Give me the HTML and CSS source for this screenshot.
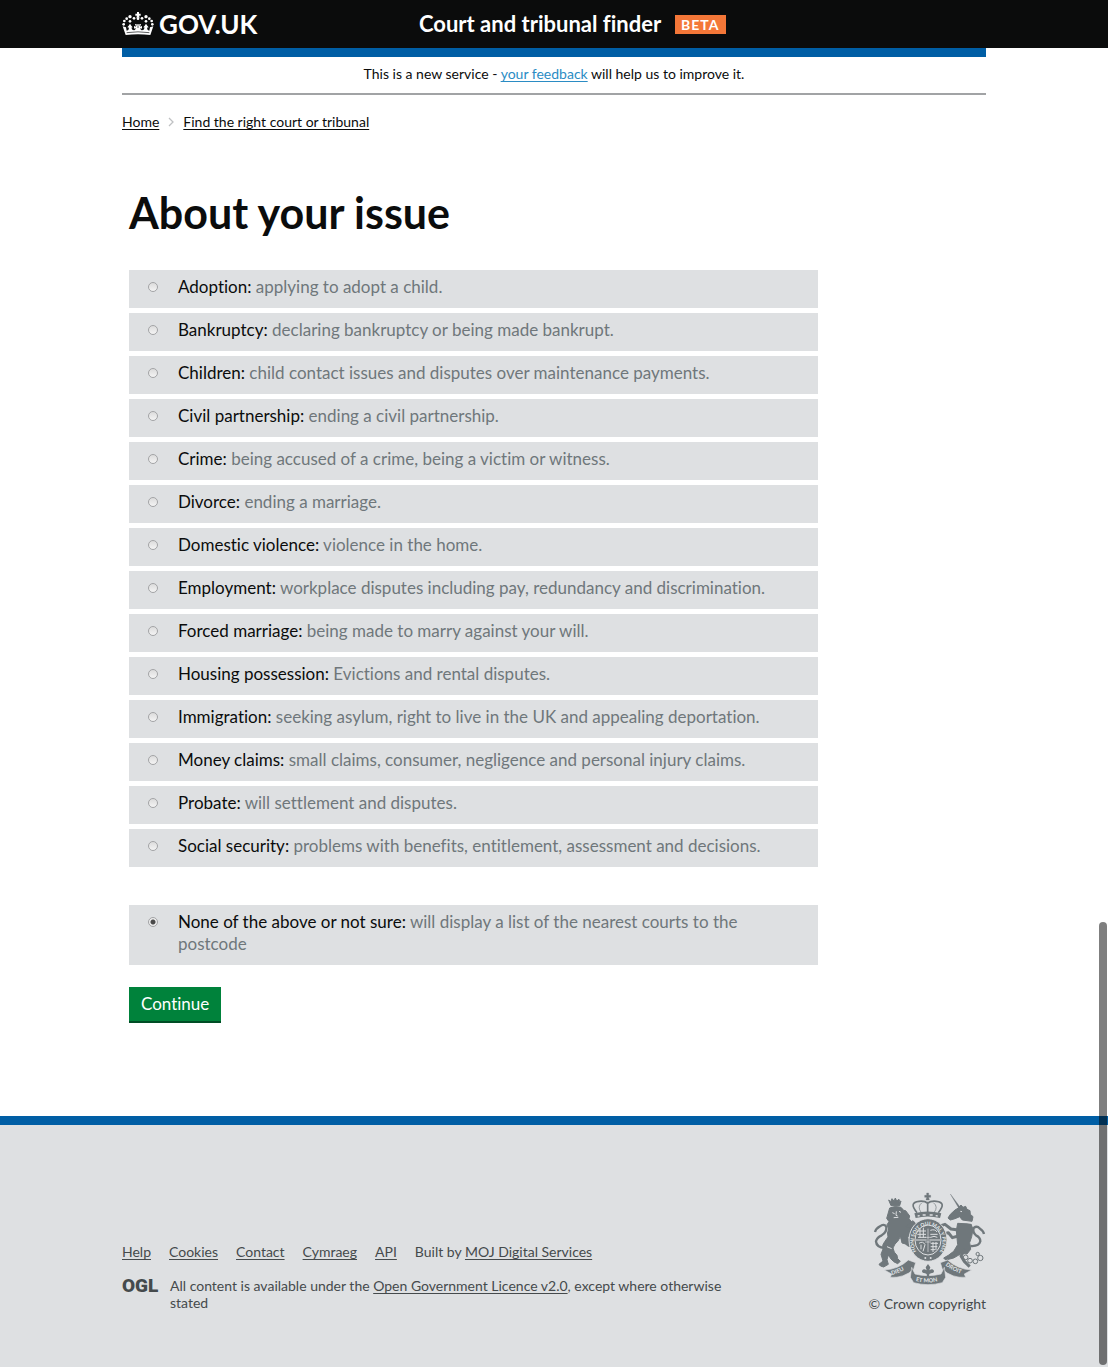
FILE: index.html
```html
<!DOCTYPE html>
<html lang="en">
<head>
<meta charset="utf-8">
<meta name="viewport" content="width=device-width, initial-scale=1">
<title>About your issue - Court and tribunal finder</title>
<link rel="stylesheet" href="styles.css">
</head>
<body>
<header class="site-header">
  <div class="container header-row">
    <a class="logo" href="#">
      <svg class="crown" viewBox="36 36 96 72" aria-hidden="true">
        <g fill="#fff">
          <path d="M81 36h6v5h5v6h-5l2 6h-10l2-6h-5v-6h5z"/>
          <circle cx="84" cy="56" r="4"/><circle cx="72" cy="55" r="4"/><circle cx="96" cy="55" r="4"/>
          <circle cx="60" cy="50" r="5"/><circle cx="108" cy="50" r="5"/>
          <circle cx="50" cy="56" r="4"/><circle cx="118" cy="56" r="4"/>
          <circle cx="43" cy="63" r="4"/><circle cx="125" cy="63" r="4"/>
          <circle cx="41" cy="73" r="4"/><circle cx="127" cy="73" r="4"/>
          <circle cx="60" cy="64" r="4"/><circle cx="108" cy="64" r="4"/>
          <path d="M38 79l10 3 2 10q7-1 7-9l-5-1 4-5 4-6 4 6 4 5-4 1q2 8 9 8 4-1 4-7l-5 2v-8l6 2-3-8h18l-3 8 6-2v8l-5-2q0 6 4 7 7 0 9-8l-4-1 4-5 4-6 4 6 4 5-5 1q0 8 7 9l2-10 10-3-9 26q-37-5-74 0z"/>
        </g>
        <path d="M50 98q34-5 68 0" fill="none" stroke="#0b0c0c" stroke-width="2"/>
        <path d="M78 76l6-5 6 5M84 76v8" fill="none" stroke="#0b0c0c" stroke-width="2"/>
      </svg>
      <span>GOV.UK</span>
    </a>
    <div class="service">
      <span class="service-name">Court and tribunal finder</span>
      <span class="beta">BETA</span>
    </div>
  </div>
</header>

<div class="container">
  <p class="notice">This is a new service - <a href="#">your feedback</a> will help us to improve it.</p>
  <nav class="breadcrumb" aria-label="Breadcrumb">
    <a href="#">Home</a>
    <svg class="chevron" viewBox="0 0 6 10" aria-hidden="true"><path d="M1 1l4 4-4 4" fill="none" stroke="#bfc1c3" stroke-width="1.3"/></svg>
    <a href="#">Find the right court or tribunal</a>
  </nav>

  <main class="content">
    <h1>About your issue</h1>
    <form>
      <div class="options">
        <label class="option"><input type="radio" name="issue"><span><b>Adoption:</b> applying to adopt a child.</span></label>
        <label class="option"><input type="radio" name="issue"><span><b>Bankruptcy:</b> declaring bankruptcy or being made bankrupt.</span></label>
        <label class="option"><input type="radio" name="issue"><span><b>Children:</b> child contact issues and disputes over maintenance payments.</span></label>
        <label class="option"><input type="radio" name="issue"><span><b>Civil partnership:</b> ending a civil partnership.</span></label>
        <label class="option"><input type="radio" name="issue"><span><b>Crime:</b> being accused of a crime, being a victim or witness.</span></label>
        <label class="option"><input type="radio" name="issue"><span><b>Divorce:</b> ending a marriage.</span></label>
        <label class="option"><input type="radio" name="issue"><span><b>Domestic violence:</b> violence in the home.</span></label>
        <label class="option"><input type="radio" name="issue"><span><b>Employment:</b> workplace disputes including pay, redundancy and discrimination.</span></label>
        <label class="option"><input type="radio" name="issue"><span><b>Forced marriage:</b> being made to marry against your will.</span></label>
        <label class="option"><input type="radio" name="issue"><span><b>Housing possession:</b> Evictions and rental disputes.</span></label>
        <label class="option"><input type="radio" name="issue"><span><b>Immigration:</b> seeking asylum, right to live in the UK and appealing deportation.</span></label>
        <label class="option"><input type="radio" name="issue"><span><b>Money claims:</b> small claims, consumer, negligence and personal injury claims.</span></label>
        <label class="option"><input type="radio" name="issue"><span><b>Probate:</b> will settlement and disputes.</span></label>
        <label class="option"><input type="radio" name="issue"><span><b>Social security:</b> problems with benefits, entitlement, assessment and decisions.</span></label>
      </div>
      <label class="option option-other"><input type="radio" name="issue" checked><span><b>None of the above or not sure:</b> will display a list of the nearest courts to the postcode</span></label>
      <button class="button" type="submit">Continue</button>
    </form>
  </main>
</div>

<footer class="site-footer">
  <div class="container footer-row">
    <div class="footer-meta">
      <ul class="footer-links">
        <li><a href="#">Help</a></li>
        <li><a href="#">Cookies</a></li>
        <li><a href="#">Contact</a></li>
        <li><a href="#">Cymraeg</a></li>
        <li><a href="#">API</a></li>
        <li>Built by <a href="#">MOJ Digital Services</a></li>
      </ul>
      <div class="licence">
        <span class="ogl">OGL</span>
        <p>All content is available under the <a href="#">Open Government Licence v2.0</a>, except where otherwise stated</p>
      </div>
    </div>
    <div class="copyright">
      <svg class="arms" viewBox="42 36 339 279" aria-hidden="true">
        <defs>
          <path id="garter" d="M172 214A43 50 0 1 1 243 214"/>
          <path id="scroll-left" d="M98 285Q128 278 156 256"/>
          <path id="scroll-mid" d="M170 303Q207 312 245 302"/>
          <path id="scroll-right" d="M259 256Q286 277 318 284"/>
        </defs>
        <g fill="#6f777b" stroke="#6f777b" stroke-width="3" stroke-linejoin="round">
          <!-- lion -->
          <path d="M89 60l6 5 4-9 6 7 4-9 4 9 7-5 2 7 4-2-4 14H96z"/>
          <path d="M92 84q16-8 34-2l8 9 6 1 12 16-2 8 8 10-2 9 4 12-4 8 4 8-14 8 6 17 10 4-4 8-12-2-14-14-9-12q-6 14-15 20l-6 12q2 14 12 22l2 10 8 8-8 7q-14-5-20-14l-8-12-4 14 4 14-14 8q-12-2-14-8l12-10-6-20 6-16q-4-12 5-22l10-14q-4-12 2-24l-5-13 6-9-7-10 3-10z"/>
          <path d="M126 176l34 4 8 9-9 8-30-8zM140 140l22-18 9 10-14 14z"/>
          <!-- unicorn -->
          <path d="M274 42l33 44-5 3z" stroke-width="1"/>
          <path d="M298 84l8-9 6 7 8-3 4 9 9 4 1 11 8 7-3 14-29-4-8-10-14 6-14 4-7-6 7-11 14-13z"/>
          <path d="M296 130l40 2 6 16-4 22-6 18 3 20-11 14-16-2-24 14-24 6-6-6 14-8 16-12 12-20-2-20-2-22z"/>
          <path d="M298 150l-22-3-18-14-12 4M298 168l-18 5-12-15-8 2M318 208l-12 20 10 16 16 16" fill="none" stroke-width="9"/>
          <!-- crown -->
          <path d="M203 39h6v7h6v6h-6l2 8h-10l2-8h-6v-6h6z" stroke-width="1"/>
        </g>
        <g fill="none" stroke="#6f777b">
          <path d="M174 98q-26-31 6-34 18-2 26 6 8-8 26-6 32 3 6 34M206 65v34" stroke-width="5"/>
          <path d="M187 98q-14-18 2-30M225 98q14-18-2-30" stroke-width="2"/>
          <path d="M168 107q38-10 77 0" stroke-width="15"/>
          <!-- tails -->
          <path d="M78 204q-26-2-27-20 3-12 17-18 16-9 14-26-8-10-19-1-12 7-15 17" stroke-width="7"/>
          <path d="M334 198q26 2 30-14 0-12-13-18-11-9-7-22 10-8 19 2 10 6 12 16" stroke-width="7"/>
          <!-- chain -->
          <circle cx="320" cy="232" r="7" stroke-width="3"/><circle cx="333" cy="242" r="7" stroke-width="3"/>
          <circle cx="349" cy="244" r="7" stroke-width="3"/><circle cx="364" cy="234" r="8" stroke-width="3"/>
          <circle cx="356" cy="222" r="5" stroke-width="3"/>
        </g>
        <path d="M100 98l7 3M120 94l6 3M112 94l-1 12 5 2M104 113l14-1M292 122l46 8M84 200l14 6M304 94l5 1" stroke="#dee0e2" stroke-width="3" fill="none"/>
        <path d="M176 108l6-1M191 105h9M212 105h9M230 107l6 1" stroke="#dee0e2" stroke-width="4"/>
        <!-- garter and shield -->
        <ellipse cx="207" cy="180" rx="57" ry="64" fill="#6f777b" stroke="#dee0e2" stroke-width="3"/>
        <ellipse cx="207" cy="180" rx="39" ry="45" fill="#6f777b" stroke="#dee0e2" stroke-width="3"/>
        <text class="arms-text"><textPath href="#garter">HONI SOIT QUI MAL Y PENSE</textPath></text>
        <g stroke="#dee0e2" stroke-width="3" fill="none">
          <path d="M171 180h72M177 153h24M175 163h26M177 172h24M183 145v28M193 143v30M214 151q14-5 20 5M214 163h22M215 172q10-6 20 0M180 190q12-8 18 4l-6 20M186 194v14M215 190h22M215 200h20M215 209h14M222 186v30M231 186v24"/>
        </g>
        <path d="M203 140h8v82h-8z" fill="#6f777b"/>
        <path d="M207 146v70M198 172h18M198 186h18" stroke="#dee0e2" stroke-width="2"/>
        <circle cx="199" cy="234" r="3" fill="#dee0e2"/><circle cx="215" cy="234" r="3" fill="#dee0e2"/>
        <!-- motto scroll -->
        <g fill="#6f777b" stroke="#dee0e2" stroke-width="2">
          <path d="M76 270q42-2 72-30l22 8-6 20q-30 27-70 24l4-10z"/>
          <path d="M338 270q-42-2-72-30l-22 8 6 20q30 27 70 24l-4-10z"/>
          <path d="M158 262l10 20q38 10 78 0l10-20 4 30-10 16q-43 12-86 0l-10-16z"/>
        </g>
        <path d="M207 252l7 10-3 9q9-7 13 0t-8 9l-5 2-1 8h-6l-1-8-5-2q-12-2-8-9t13 0l-3-9z" fill="#6f777b"/>
        <text class="arms-text motto"><textPath href="#scroll-left">DIEU</textPath></text>
        <text class="arms-text motto"><textPath href="#scroll-mid">ET MON</textPath></text>
        <text class="arms-text motto"><textPath href="#scroll-right">DROIT</textPath></text>
      </svg>
      <span>© Crown copyright</span>
    </div>
  </div>
</footer>
<div class="scroll-thumb" aria-hidden="true"></div>
</body>
</html>
```
FILE: styles.css
```css
* { box-sizing: border-box; }

html { scrollbar-width: none; }

body {
  margin: 0;
  background: #fff;
  color: #0b0c0c;
  font-family: Lato, "Liberation Sans", sans-serif;
  font-size: 14px;
  line-height: 18px;
  font-variant-ligatures: none;
}

p, h1, ul { margin: 0; padding: 0; }

a {
  color: inherit;
  text-decoration: underline;
  text-underline-offset: 2px;
  text-decoration-thickness: 1px;
  text-decoration-skip-ink: none;
}

.container {
  max-width: 864px;
  margin: 0 auto;
}

/* Header */
.site-header { background: #0b0c0c; color: #fff; }

.header-row {
  display: grid;
  grid-template-columns: 297px 1fr;
  align-items: center;
  height: 48px;
}

.logo {
  display: flex;
  align-items: center;
  gap: 5px;
  font-size: 26px;
  line-height: 32px;
  font-weight: 700;
  text-decoration: none;
}

.crown { width: 32px; height: 24px; }

.service { display: flex; align-items: center; gap: 14px; }

.service-name { font-size: 22px; line-height: 28px; font-weight: 700; }

.beta {
  padding: 0 6px;
  background: #f47738;
  font-weight: 700;
  line-height: 19px;
  letter-spacing: 1px;
}

/* Phase notice and breadcrumb */
.notice {
  padding: 8px 0 10px;
  border-top: 9px solid #005ea5;
  border-bottom: 2px inset #a1a3a5;
  text-align: center;
}

.notice a { color: #2b8cc4; }

.breadcrumb {
  display: flex;
  align-items: center;
  gap: 9px;
  padding: 18px 0;
}

.chevron { width: 6px; height: 10px; }

/* Question */
.content {
  max-width: 696px;
  padding: 39px 0 93px 7px;
}

h1 {
  font-size: 43px;
  line-height: 50px;
  font-weight: 700;
}

form { padding-top: 32px; }

.options { display: grid; gap: 5px; }

.option {
  display: flex;
  align-items: flex-start;
  gap: 20px;
  padding: 6px 36px 10px 19px;
  background: #dee0e2;
  color: #6f777b;
  font-size: 17px;
  line-height: 22px;
}

.option b { color: #0b0c0c; font-weight: 400; }

.option-other { margin-top: 38px; }

.option input {
  appearance: none;
  flex: none;
  width: 10px;
  height: 10px;
  margin: 6px 0;
  border: 1px solid #a3a4a6;
  border-radius: 50%;
  background: linear-gradient(#dcdcdc, #f4f4f4);
}

.option input:checked {
  background: radial-gradient(circle, #4a4a4a 2px, #ededed 3px);
}

.button {
  display: block;
  margin-top: 22px;
  padding: 0 12px;
  border: 0;
  border-bottom: 2px solid #004d25;
  background: #00823b;
  color: #fff;
  font: inherit;
  font-size: 17px;
  line-height: 34px;
}

/* Footer */
.site-footer {
  border-top: 9px solid #005ea5;
  background: #dee0e2;
  color: #454a4c;
}

.footer-row {
  display: flex;
  justify-content: space-between;
  align-items: flex-end;
  padding: 67px 0 54px;
}

.footer-meta { flex: 0 1 628px; }

.footer-links {
  display: flex;
  flex-wrap: wrap;
  gap: 18px;
  list-style: none;
}

.licence {
  display: flex;
  gap: 11px;
  margin-top: 16px;
  padding-bottom: 2px;
  line-height: 17px;
}

.ogl {
  flex: none;
  width: 37px;
  font-family: Roboto, sans-serif;
  font-size: 19px;
  font-weight: 900;
}

.copyright {
  display: grid;
  justify-items: end;
  gap: 10px;
}

.arms { width: 113px; height: 93px; }

.arms-text {
  fill: #dee0e2;
  font-size: 15px;
  font-weight: 900;
}

.motto { font-size: 17px; }

/* Overlay scrollbar thumb */
.scroll-thumb {
  position: fixed;
  right: 1px;
  bottom: 2px;
  width: 8px;
  height: 32.4%;
  border-radius: 4px;
  background: rgba(0, 0, 0, .5);
}
```
